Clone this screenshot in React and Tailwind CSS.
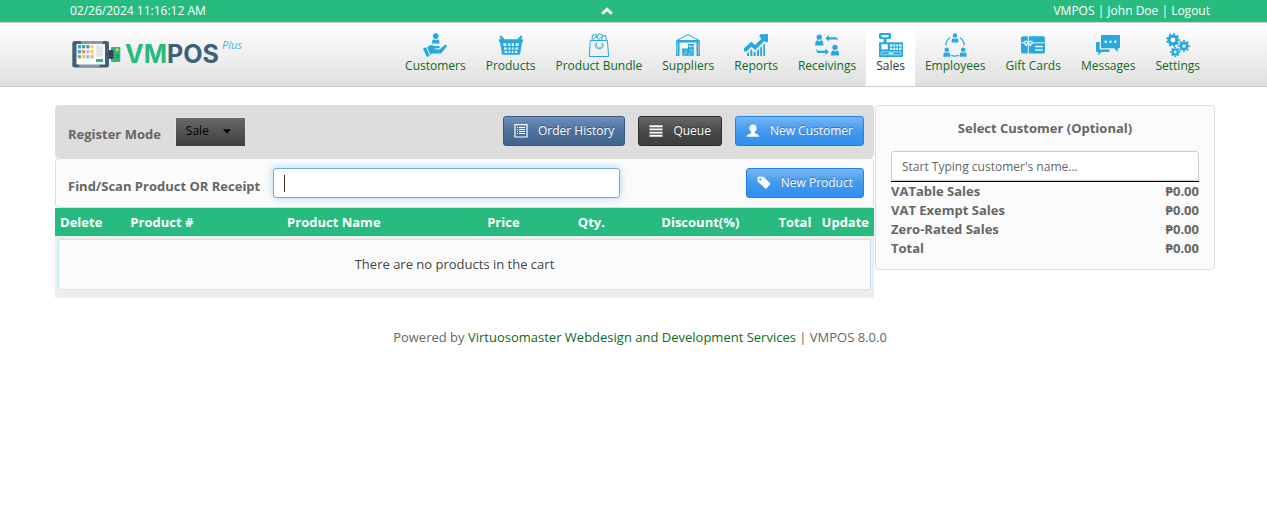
import React from 'react';

const blue = '#27a9e0';

function Person({ x, y, s = 1 }) {
  return (
    <g transform={`translate(${x} ${y}) scale(${s})`}>
      <circle cx="0" cy="-2.2" r="2.4" />
      <path d="M-3.6 5.2V3.6C-3.6 1.6-2.6.6-1.4.6L0 1.6 1.4.6C2.6.6 3.6 1.6 3.6 3.6V5.2Z" />
    </g>
  );
}

function Gear({ cx, cy, r, w, teeth = 8 }) {
  return (
    <g fill="none" stroke={blue}>
      <circle cx={cx} cy={cy} r={r} strokeWidth={w} />
      <circle
        cx={cx}
        cy={cy}
        r={r + w / 2 + 0.5}
        strokeWidth="1.6"
        pathLength={teeth * 2}
        strokeDasharray="1 1"
        strokeDashoffset="0.5"
      />
    </g>
  );
}

const drawings = {
  customers: (
    <>
      <circle cx="12.7" cy="3.1" r="2.8" />
      <path d="M9 10.4V9C9 7.4 10 6.5 11.2 6.3L12.7 7.2 14.2 6.3C15.6 6.5 16.5 7.4 16.5 9V10.4Z" />
      <path d="M0 15.6 3 14.2 6.8 22.8 3.9 24Z" />
      <path d="M4.2 14.6C6.5 11.6 9 11.4 11 13H15.4C17 13 17.2 15 15.6 15.3L11.4 15.6V16.3L16.6 16.4 21.6 11.9C23 11.1 24.5 12.3 23.7 13.6L19 19.4C18.2 20.3 17.4 20.5 16.4 20.5H9.4L7.4 21.8Z" />
    </>
  ),
  products: (
    <>
      <path d="M.4 3.6 2.2 2.4 5.6 6.2H18.4L21.8 2.4 23.6 3.6 22 6.2H24V9H23L21.2 20.4C21 21.4 20.6 21.8 19.8 21.8H4.2C3.4 21.8 3 21.4 2.8 20.4L1 9H0V6.2H2Z" />
      <path
        d="M4.2 10.3H7.4L7.6 13H4.7ZM9.2 10.3H11.3V13H9.3ZM12.8 10.3H15V13H12.8ZM16.7 10.3H19.9L19.4 13H16.5ZM4.9 14.4H7.7L7.9 16.8H5.3ZM9.4 14.4H11.3V16.8H9.5ZM12.8 14.4H14.8L14.7 16.8H12.8ZM16.4 14.4H19.1L18.7 16.8H16.2ZM5.5 18.1H8L8.1 20H5.9ZM9.6 18.1H11.3V20H9.7ZM12.8 18.1H14.5L14.4 20H12.8ZM16.1 18.1H18.5L18.2 20H16Z"
        fill="#f4f4f4"
      />
    </>
  ),
  bundle: (
    <g fill="none" stroke={blue} strokeWidth="1">
      <path d="M3.3 7.5H20.4L21.7 23.5H2.3Z" />
      <path d="M9.5 9.5V12.2C9.5 16 15 16 15 12.2V9.5M8.3 10.5V12.5C8.3 17 16.2 17 16.2 12.5V10.5" strokeWidth=".8" />
      <path d="M5.2 7V2.4L9 1.3 10.2 5.2M9.7 4 11.8.7 15.5 2 14.6 7M15.3 3.2 18.6 2.3 19.3 7M6.5 6.5 9 3.5 12 6.5 14 4.2" />
    </g>
  ),
  suppliers: (
    <>
      <path d="M0 7.4 12 1 24 7.4V23H20.5V9.5H3.5V23H0Z" />
      <path d="M2.8 6.9 12 2.1 21.2 6.9Z" fill="#f8f8f8" />
      <path d="M1.2 8.5V21.8M22.8 8.5V21.8" stroke="#d8eef7" strokeWidth=".7" />
      <path d="M12 11H17.7V22.7H6.2V15.5H12Z" />
      <path d="M12.6 13.3H17M9.2 17.2 10.5 19 9.2 20.8H7.6M13.5 16.8H15.3V18.4M12.3 20.2 14 21.2 16 19.2M13.2 12 15 14.5" fill="none" stroke="#d8eef7" strokeWidth=".8" />
    </>
  ),
  reports: (
    <>
      <path d="M0 15.3 7.3 8.7 11 12 17.4 5.7 15.3 3.7 16.3 1.2 24 1V8.7L21.9 9.6 20.4 8 11.2 17 7.4 13.7 2.5 18.5H0Z" />
      <path d="M3 23V20.6L5 18.5V23ZM6.3 23V17.4L7.6 16.6 8.3 17.2V23ZM9.6 23V18.5L11 19.4 11.7 18.8V23ZM13 23V17.6L14.9 15.9V23ZM16.2 23V14.8L18 13V23ZM19.3 23V11.8L21 10.4V23Z" />
    </>
  ),
  receivings: (
    <>
      <Person x="4.3" y="6.6" s="1.12" />
      <Person x="20" y="16.8" s="1.12" />
      <path d="M10.2 5.2 14 2V4.2H20.5C22 4.2 22.9 5.4 22.9 8.2 22 6.8 21.5 6.5 20.5 6.5H14V8.4Z" />
      <path d="M14 18.8 10.2 15.4V17.7H4C2.8 17.7 2 17 1.2 15.4 1.1 18.4 2 20.1 4 20.1H10.2V22Z" />
    </>
  ),
  sales: (
    <>
      <path d="M1.5 0H10.5Q12 0 12 1.5V4.5Q12 6 10.5 6H7.6V9.2H23.2Q24 9.2 24 10V23.2Q24 24 23.2 24H.8Q0 24 0 23.2V10Q0 9.2.8 9.2H4.6V6H1.5Q0 6 0 4.5V1.5Q0 0 1.5 0Z" />
      <path d="M2.5 2H9.5V4.2H2.5Z" fill="#eaf7fd" />
      <path d="M2.4 11.2H8.7V16.4H2.4Z" fill="#fff" />
      <path d="M11.2 11.3H22.4V17H11.2Z" fill="#fff" />
      <path d="M14 11V17M16.8 11V17M19.6 11V17M11 14.1H22.5" stroke={blue} strokeWidth="1.1" />
      <path d="M2.2 18.9H21.8V21.8H2.2Z" fill="none" stroke="#bfe6f7" strokeWidth=".8" />
      <path d="M9.5 20.3H14.5" stroke="#fff" strokeWidth="1.2" />
    </>
  ),
  employees: (
    <>
      <Person x="12" y="4.6" s=".95" />
      <Person x="3.8" y="18.8" s=".95" />
      <Person x="20.2" y="18.8" s=".95" />
      <path d="M7.3 4.8C4.4 6.4 2.8 9.4 2.9 12.4M16.7 4.8C19.6 6.4 21.2 9.4 21.1 12.4M8.2 22.3C10.6 23.3 13.4 23.3 15.8 22.3" fill="none" stroke={blue} strokeWidth="1.2" />
    </>
  ),
  giftcards: (
    <>
      <rect x="0" y="3.2" width="24" height="17.4" rx="1.8" />
      <path d="M0 9.8H24M7.3 3V20.8" stroke="#f4f4f4" strokeWidth="1" />
      <path d="M7.3 9.8C5 6.6 3 8.8 3.6 10.6 4.6 12 6 10.8 7.3 9.8 9.6 6.6 11.8 8.8 11.2 10.6 10 12 8.6 10.8 7.3 9.8L4.8 13.2M7.3 9.8 10 13.2" fill={blue} stroke="#f4f4f4" strokeWidth="1.3" />
      <path d="M14 13.5H21.8M14 17H21.8" stroke="#f4f4f4" strokeWidth="1.4" />
    </>
  ),
  messages: (
    <>
      <path d="M6 2H23Q24 2 24 3V14.2Q24 15.2 23 15.2H21.8V19L18 15.2H6Q5 15.2 5 14.2V3Q5 2 6 2Z" />
      <path d="M1 9H3.7V15.4Q3.7 16.5 4.8 16.5H13.5V18Q13.5 19 12.5 19H5.4L2.4 22.3V19H1Q0 19 0 18V10Q0 9 1 9Z" />
      <g fill="#fff">
        <circle cx="9.7" cy="8.8" r="1.2" />
        <circle cx="14.5" cy="8.8" r="1.2" />
        <circle cx="19.3" cy="8.8" r="1.2" />
      </g>
    </>
  ),
  settings: (
    <>
      <Gear cx={7} cy={7} r={4} w={3.2} teeth={9} />
      <Gear cx={18} cy={13} r={3.2} w={2.8} teeth={8} />
      <Gear cx={9.2} cy={19} r={2.6} w={2.4} teeth={8} />
    </>
  ),
};

const nav = [
  ['Customers', 'customers'],
  ['Products', 'products'],
  ['Product Bundle', 'bundle'],
  ['Suppliers', 'suppliers'],
  ['Reports', 'reports'],
  ['Receivings', 'receivings'],
  ['Sales', 'sales'],
  ['Employees', 'employees'],
  ['Gift Cards', 'giftcards'],
  ['Messages', 'messages'],
  ['Settings', 'settings'],
];

function Logo() {
  const dots = ['#27a9e0', '#27b97f', '#4b9ad4', '#f5d547', '#4b9ad4', '#f08a4b', '#c9b8e8', '#f5d547', '#7fae6a', '#f5c06a', '#7cc8f0', '#f5a58a'];
  return (
    <a href="#home" aria-label="VMPOS Plus" className="block">
      <svg width="176" height="34" viewBox="0 0 176 34" aria-hidden="true">
        <rect x="2.3" y="5" width="36.7" height="26.5" rx="2.5" fill="#405f78" />
        <path d="M11 5H33L29 31.5H9Z" fill="#8499ab" />
        <rect x="6.5" y="8" width="28.5" height="20.5" fill="#fdfdfd" />
        {dots.map((c, i) => (
          <rect key={i} x={7.8 + (i % 4) * 4.2} y={9 + Math.floor(i / 4) * 5} width="3.3" height="3.4" rx=".8" fill={c} />
        ))}
        <path d="M26 9H33V21H26Z" fill="#ececec" />
        <path d="M26 12H33M26 15H33M26 18H33" stroke="#cfd4d8" strokeWidth=".8" />
        <path d="M26 23H33V26H26Z" fill="#27b97f" />
        <circle cx="37" cy="18" r=".8" fill="#1f3345" />
        <rect x="41" y="11" width="9.3" height="15" rx="1" fill="#27b97f" />
        <rect x="39" y="14" width="4.5" height="9" rx="1" fill="#3c4148" />
        <rect x="46" y="12.5" width="2.6" height="2.4" fill="#e8d84a" />
        <path d="M45 19H49M45 22H47" stroke="#1b8a5c" strokeWidth="1" />
        <rect x="47" y="20.5" width="1.6" height="1.6" fill="#2b7fc4" />
        <text x="55" y="27" fontFamily="Inter, sans-serif" fontWeight="700" fontSize="25" fill="#27b97f">
          VM<tspan fill="#405f78">POS</tspan>
        </text>
        <text x="152" y="13" fontFamily="'Open Sans', sans-serif" fontStyle="italic" fontWeight="400" fontSize="11" fill="#4bb3e0">
          Plus
        </text>
      </svg>
    </a>
  );
}

const glyphs = {
  list: (
    <>
      <path d="M1 .6H13V13H1Z" fill="none" stroke="currentColor" strokeWidth="1.2" />
      <path d="M3 3.5H4M5 3.5H11M3 5.5H4M5 5.5H11M3 7.5H4M5 7.5H11M3 9.5H4M5 9.5H11" stroke="currentColor" strokeWidth="1" />
    </>
  ),
  menu: <path d="M.5 2.2H13.5M.5 5.4H13.5M.5 8.6H13.5M.5 11.8H13.5" stroke="currentColor" strokeWidth="1.9" />,
  user: <path d="M7 .6C9.5.6 10.6 2.3 10.6 4.2 10.6 6 9.8 7.2 8.8 8V9.2C10.8 10 13.2 10.6 13.4 12.8H.6C.8 10.6 3.2 10 5.2 9.2V8C4.2 7.2 3.4 6 3.4 4.2 3.4 2.3 4.5.6 7 .6Z" fill="currentColor" />,
  tag: <path fillRule="evenodd" d="M.6 1.6Q.6.8 1.4.8H6.4L13.2 7.2Q13.7 7.8 13.2 8.4L9.4 12.4Q8.8 13 8.2 12.4L.6 5.6ZM3.3 2.2A1.2 1.2 0 1 0 3.3 4.6 1.2 1.2 0 1 0 3.3 2.2Z" fill="currentColor" />,
};

const tones = {
  steel: 'border-[#385a7d] bg-linear-to-b from-[#7090bd] via-[#4d709d] to-[#42658c]',
  dark: 'border-[#2c2d2d] bg-linear-to-b from-[#686a6a] via-[#484a49] to-[#3d3e3d]',
  blue: 'border-[#2283e1] bg-linear-to-b from-[#74b6f5] via-[#4299ef] to-[#2e8eef]',
};

function Btn({ tone, icon, children }) {
  return (
    <button
      type="button"
      className={`flex h-[30px] cursor-pointer items-center gap-2.5 rounded-[3px] border px-2.5 text-xs text-white [text-shadow:0_-1px_0_rgba(0,0,0,0.35)] ${tones[tone]}`}
    >
      <svg width="14" height="14" viewBox="0 0 14 14" aria-hidden="true">
        {glyphs[icon]}
      </svg>
      {children}
    </button>
  );
}

const totals = ['VATable Sales', 'VAT Exempt Sales', 'Zero-Rated Sales', 'Total'];

export default function App() {
  return (
    <div className="min-h-screen bg-white text-[13px] leading-[18px] text-[#666] [font-family:'Open_Sans','Noto_Sans',sans-serif]">
      <div className="flex h-[22px] items-center bg-[#27bb80] pr-[57px] pl-[70px] text-xs text-white">
        <div className="w-[46.6%]">02/26/2024 11:16:12 AM</div>
        <button type="button" aria-label="Collapse header" className="cursor-pointer">
          <svg width="12" height="8" viewBox="0 0 12 8" aria-hidden="true">
            <path d="M1.2 6.8 6 2.2 10.8 6.8" fill="none" stroke="#fff" strokeWidth="2.9" />
          </svg>
        </button>
        <div className="ml-auto whitespace-nowrap">
          VMPOS | John Doe | <a href="#logout">Logout</a>
        </div>
      </div>

      <header className="flex h-[65px] items-stretch justify-between border-y border-[#ccc] bg-linear-to-b from-white to-[#e0e0e0] pr-[57px] pl-[70px]">
        <div className="pt-[13px]">
          <Logo />
        </div>
        <nav className="flex text-xs leading-[18px]">
          {nav.map(([label, icon]) => (
            <a
              key={icon}
              href={`#${icon}`}
              className={`flex flex-col items-center px-[10px] pt-[10px] leading-[18px] whitespace-nowrap ${
                icon === 'sales' ? 'bg-white text-[#333]' : 'text-[#0f6a24]'
              }`}
            >
              <svg width="24" height="24" viewBox="0 0 24 24" fill={blue} aria-hidden="true">
                {drawings[icon]}
              </svg>
              <span>{label}</span>
            </a>
          ))}
        </nav>
      </header>

      <main className="flex items-start gap-px pt-[18px] pr-[52px] pl-[55px]">
        <section className="min-w-0 flex-1">
          <div className="flex h-[53px] items-center justify-between rounded-sm bg-[#ddd] pr-[10px] pl-[13px]">
            <div className="flex items-center gap-[14px]">
              <label htmlFor="mode" className="pt-1 font-bold">
                Register Mode
              </label>
              <div className="grid items-center">
                <select
                  id="mode"
                  className="col-start-1 row-start-1 h-[30px] w-[71px] cursor-pointer appearance-none border border-[#dbe4ee] bg-linear-to-b from-[#686a6a] to-[#3d3e3d] pb-0.5 pl-[10px] text-xs text-black"
                >
                  <option>Sale</option>
                </select>
                <svg width="8" height="5" viewBox="0 0 8 5" aria-hidden="true" className="pointer-events-none col-start-1 row-start-1 mr-[15px] justify-self-end">
                  <path d="M0 .3H8L4 4.5Z" />
                </svg>
              </div>
            </div>
            <div className="flex gap-[13px] pb-0.5">
              <Btn tone="steel" icon="list">Order History</Btn>
              <Btn tone="dark" icon="menu">Queue</Btn>
              <Btn tone="blue" icon="user">New Customer</Btn>
            </div>
          </div>

          <div className="flex h-[50px] items-center justify-between rounded-sm border border-[#ddd] bg-[#fbfbfb] pr-[9px] pl-3">
            <div className="flex items-center gap-[13px]">
              <label htmlFor="scan" className="pt-1.5 font-bold">
                Find/Scan Product OR Receipt
              </label>
              <div className="flex h-[30px] w-[347px] items-center rounded-[3px] border border-[#66afe9] bg-white px-[10px] shadow-[0_0_8px_rgba(102,175,233,0.5)]">
                <span className="h-[17px] w-px bg-[#333]" />
                <input id="scan" type="text" className="min-w-0 flex-1 outline-none" />
              </div>
            </div>
            <Btn tone="blue" icon="tag">New Product</Btn>
          </div>

          <table className="w-full table-fixed border-collapse bg-[#ededed]">
            <thead>
              <tr className="h-7 bg-[#27bb80] font-bold whitespace-nowrap text-white">
                <th className="w-[6.4%]">Delete</th>
                <th className="w-[13.3%]">Product #</th>
                <th className="w-[28.7%]">Product Name</th>
                <th className="w-[12.7%]">Price</th>
                <th className="w-[8.8%]">Qty.</th>
                <th className="w-[17.8%]">Discount(%)</th>
                <th className="w-[5.3%]">Total</th>
                <th className="w-[7%]">Update</th>
              </tr>
            </thead>
            <tbody>
              <tr>
                <td colSpan={8} className="px-[3px] pt-[3px] pb-2">
                  <div className="rounded-[3px] border border-[#bce8f1] border-b-[#e3e3e3] bg-[#fbfbfb] pt-[15px] pr-5 pb-4 text-center text-[#444]">
                    There are no products in the cart
                  </div>
                </td>
              </tr>
            </tbody>
          </table>
        </section>

        <aside className="w-[340px] rounded-sm border border-[#ddd] bg-[#fbfbfb] px-[15px] pt-[13px] pb-[11px] font-bold">
          <label htmlFor="customer" className="block text-center">
            Select Customer (Optional)
          </label>
          <div className="mt-3.5 border-b border-black">
            <input
              id="customer"
              type="text"
              placeholder="Start Typing customer's name..."
              className="block h-[30px] w-full rounded-[3px] border border-[#ccc] bg-white px-[10px] text-xs font-normal placeholder:text-[#666]"
            />
          </div>
          <dl className="leading-[19px]">
            {totals.map((t) => (
              <div key={t} className="flex justify-between">
                <dt>{t}</dt>
                <dd>₱0.00</dd>
              </div>
            ))}
          </dl>
        </aside>
      </main>

      <footer className="mt-[30px] pr-[52px] pl-[65px] text-center">
        Powered by{' '}
        <a href="#vendor" className="text-[#0f6a24]">
          Virtuosomaster Webdesign and Development Services
        </a>{' '}
        | VMPOS 8.0.0
      </footer>
    </div>
  );
}
